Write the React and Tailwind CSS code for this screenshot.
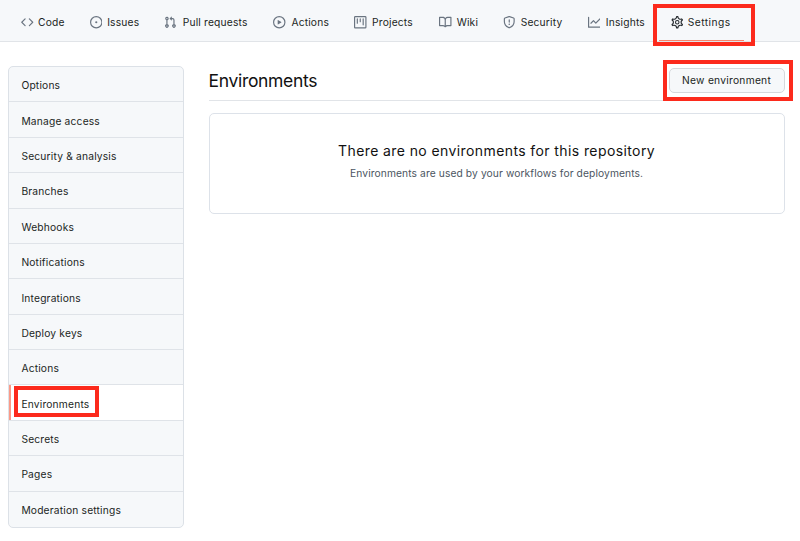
import React from "react";

const gearTeeth =
  "M7.429 1.525a6.593 6.593 0 011.142 0c.036.003.108.036.137.146l.289 1.105c.147.56.55.967.997 1.189.174.086.341.183.501.29.417.278.97.423 1.53.27l1.102-.303c.11-.03.175.016.195.046.219.31.41.641.573.989.014.031.022.11-.059.19l-.815.806c-.411.406-.562.957-.53 1.456a4.588 4.588 0 010 .582c-.032.499.119 1.05.53 1.456l.815.806c.08.08.073.159.059.19a6.494 6.494 0 01-.573.99c-.02.029-.086.074-.195.045l-1.103-.303c-.559-.153-1.112-.008-1.529.27-.16.107-.327.204-.5.29-.449.222-.851.628-.998 1.189l-.289 1.105c-.029.11-.101.143-.137.146a6.613 6.613 0 01-1.142 0c-.036-.003-.108-.037-.137-.146l-.289-1.105c-.147-.56-.55-.967-.997-1.189a4.502 4.502 0 01-.501-.29c-.417-.278-.97-.423-1.53-.27l-1.102.303c-.11.03-.175-.016-.195-.046a6.492 6.492 0 01-.573-.989c-.014-.031-.022-.11.059-.19l.815-.806c.411-.406.562-.957.53-1.456a4.587 4.587 0 010-.582c.032-.499-.119-1.05-.53-1.456l-.815-.806c-.08-.08-.073-.159-.059-.19a6.44 6.44 0 01.573-.99c.02-.029.086-.075.195-.045l1.103.303c.559.153 1.112.008 1.529-.27.16-.107.327-.204.5-.29.449-.222.851-.628.998-1.189l.289-1.105c.029-.11.101-.143.137-.146z";

const icons = {
  code: <path d="M4.72 3.22a.75.75 0 011.06 1.06L2.06 8l3.72 3.72a.75.75 0 11-1.06 1.06L.47 8.53a.75.75 0 010-1.06l4.25-4.25zm6.56 0a.75.75 0 10-1.06 1.06L13.94 8l-3.72 3.72a.75.75 0 101.06 1.06l4.25-4.25a.75.75 0 000-1.06l-4.25-4.25z" />,
  issue: (
    <>
      <circle cx="8" cy="8" r="7.25" fill="none" stroke="currentColor" strokeWidth="1.5" />
      <circle cx="8" cy="8" r="1.4" />
    </>
  ),
  pull: <path d="M7.177 3.073L9.573.677A.25.25 0 0110 .854v4.792a.25.25 0 01-.427.177L7.177 3.427a.25.25 0 010-.354zM3.75 2.5a.75.75 0 100 1.5.75.75 0 000-1.5zm-2.25.75a2.25 2.25 0 113 2.122v5.256a2.251 2.251 0 11-1.5 0V5.372A2.25 2.25 0 011.5 3.25zM11 2.5h-1V4h1a1 1 0 011 1v5.628a2.251 2.251 0 101.5 0V5A2.5 2.5 0 0011 2.5zm1 10.25a.75.75 0 111.5 0 .75.75 0 01-1.5 0zM3.75 12a.75.75 0 100 1.5.75.75 0 000-1.5z" fillRule="evenodd" />,
  play: <path d="M1.5 8a6.5 6.5 0 1113 0 6.5 6.5 0 01-13 0zM8 0a8 8 0 100 16A8 8 0 008 0zM6.379 5.227A.25.25 0 006 5.442v5.117a.25.25 0 00.379.214l4.264-2.559a.25.25 0 000-.428L6.379 5.227z" fillRule="evenodd" />,
  project: <path d="M1.75 0A1.75 1.75 0 000 1.75v12.5C0 15.216.784 16 1.75 16h12.5A1.75 1.75 0 0016 14.25V1.75A1.75 1.75 0 0014.25 0H1.75zM1.5 1.75a.25.25 0 01.25-.25h12.5a.25.25 0 01.25.25v12.5a.25.25 0 01-.25.25H1.75a.25.25 0 01-.25-.25V1.75zM11.75 3a.75.75 0 00-.75.75v7.5a.75.75 0 001.5 0v-7.5a.75.75 0 00-.75-.75zm-8.25.75a.75.75 0 011.5 0v5.5a.75.75 0 01-1.5 0v-5.5zM8 3a.75.75 0 00-.75.75v3.5a.75.75 0 001.5 0v-3.5A.75.75 0 008 3z" fillRule="evenodd" />,
  book: <path d="M0 1.75A.75.75 0 01.75 1h4.253c1.227 0 2.317.59 3 1.501A3.744 3.744 0 0111.006 1h4.245a.75.75 0 01.75.75v10.5a.75.75 0 01-.75.75h-4.507a2.25 2.25 0 00-1.591.659l-.622.621a.75.75 0 01-1.06 0l-.622-.621A2.25 2.25 0 005.258 13H.75a.75.75 0 01-.75-.75V1.75zm8.755 3a2.25 2.25 0 012.25-2.25H14.5v9h-3.757c-.71 0-1.4.201-1.992.572l.004-7.322zm-1.504 7.324l.004-5.073-.002-2.253A2.25 2.25 0 005.003 2.5H1.5v9h3.757a3.75 3.75 0 011.994.574z" fillRule="evenodd" />,
  shield: <path d="M7.467.133a1.75 1.75 0 011.066 0l5.25 1.68A1.75 1.75 0 0115 3.48V7c0 1.566-.32 3.182-1.303 4.682-.983 1.498-2.585 2.813-5.032 3.855a1.7 1.7 0 01-1.33 0c-2.447-1.042-4.049-2.357-5.032-3.855C1.32 10.182 1 8.566 1 7V3.48a1.75 1.75 0 011.217-1.667l5.25-1.68zm.61 1.429a.25.25 0 00-.153 0l-5.25 1.68a.25.25 0 00-.174.238V7c0 1.358.275 2.666 1.057 3.86.784 1.194 2.121 2.34 4.366 3.297a.2.2 0 00.154 0c2.245-.956 3.582-2.104 4.366-3.298C13.225 9.666 13.5 8.36 13.5 7V3.48a.25.25 0 00-.174-.237l-5.25-1.68zM9 10.5a1 1 0 11-2 0 1 1 0 012 0zm-.25-5.75a.75.75 0 10-1.5 0v3a.75.75 0 001.5 0v-3z" fillRule="evenodd" />,
  graph: <path d="M1.5 1.75a.75.75 0 00-1.5 0v12.5c0 .414.336.75.75.75h14.5a.75.75 0 000-1.5H1.5V1.75zm14.28 2.53a.75.75 0 00-1.06-1.06L10 7.94 7.53 5.47a.75.75 0 00-1.06 0L3.22 8.72a.75.75 0 001.06 1.06L7 7.06l2.47 2.47a.75.75 0 001.06 0l5.25-5.25z" fillRule="evenodd" />,
  gear: (
    <g fill="none" stroke="currentColor" strokeWidth="1.35">
      <path d={gearTeeth} transform="translate(8 8) scale(1.115) translate(-8 -8)" />
      <circle cx="8" cy="8" r="2.25" />
    </g>
  ),
};

const tabs = [
  { icon: "code", label: "Code", width: "w-[68.5px]", gap: "gap-[4.6px]" },
  { icon: "issue", label: "Issues", width: "w-[74.2px]", gap: "gap-[5.2px]" },
  { icon: "pull", label: "Pull requests", width: "w-[109.8px]", gap: "gap-[6.5px]" },
  { icon: "play", label: "Actions", width: "w-[80.7px]", gap: "gap-[5.4px]" },
  { icon: "project", label: "Projects", width: "w-[85px]", gap: "gap-[5.4px]" },
  { icon: "book", label: "Wiki", width: "w-[64px]", gap: "gap-[5px]" },
  { icon: "shield", label: "Security", width: "w-[84.7px]", gap: "gap-[5px]" },
  { icon: "graph", label: "Insights", width: "w-[83.2px]", gap: "gap-[5.4px]" },
  { icon: "gear", label: "Settings", width: "w-[60px]", gap: "gap-[4.2px]", active: true },
];

const menu = [
  "Options", "Manage access", "Security & analysis", "Branches", "Webhooks", "Notifications",
  "Integrations", "Deploy keys", "Actions", "Environments", "Secrets", "Pages", "Moderation settings",
];

function Tab({ icon, label, width, gap, active }) {
  return (
    <a className={`relative flex h-full shrink-0 items-center whitespace-nowrap pt-[4px] ${width} ${gap}`}>
      <svg viewBox="0 0 16 16" fill="currentColor" className={`size-[12.5px] shrink-0 ${active ? "text-[#24292e]" : "text-[#6a7480]"}`}>
        {icons[icon]}
      </svg>
      <span className={active ? "tracking-[0.44px]" : "tracking-[0.18px]"}>{label}</span>
      {active && (
        <>
          <span className="absolute -left-[18px] top-1 h-[42px] w-[102px] border-4 border-[#fc2a1c]" />
          <span className="absolute bottom-0 -left-3 h-px w-[85px] bg-[#f9826c]" />
        </>
      )}
    </a>
  );
}

export default function App() {
  return (
    <div className="h-[541px] w-[800px] overflow-hidden bg-white font-['Inter',sans-serif] text-[10.25px] tracking-[0.13px] text-[#1b1f23]">
      <nav className="flex h-[42px] border-b border-[#e1e4e8] bg-[#f6f8fa] pl-[21px]">
        {tabs.map((t) => <Tab key={t.label} {...t} />)}
      </nav>
      <div className="flex items-start gap-[24.6px] pl-[8.4px] pt-6">
        <aside className="grid h-[462px] w-[175.6px] shrink-0 auto-rows-fr divide-y divide-[#dfe3e8] rounded-[5px] border border-[#dce1e7] bg-[#f6f8fa]">
          {menu.map((m) => (
            <a key={m} className={`relative flex items-center pl-[12px] pt-[3.4px] tracking-[0.18px] ${m === "Environments" ? "bg-white" : ""}`}>
              {m}
              {m === "Environments" && (
                <>
                  <span className="absolute inset-y-0 left-0 w-[1.5px] bg-[#fb9a88]" />
                  <span className="absolute left-[4.6px] top-[1px] h-[31px] w-[85px] border-4 border-[#fc2a1c]" />
                </>
              )}
            </a>
          ))}
        </aside>
        <main className="w-[576px]">
          <header className="flex h-[35px] items-start justify-between border-b border-[#e1e4e8]">
            <h1 className="pt-[1.5px] text-[17.5px] leading-[26px] tracking-[-0.33px] text-[#111]">Environments</h1>
            <div className="relative pt-[2px]">
              <button className="h-[25px] w-[116px] rounded-[5px] border border-[#d5d8dc] bg-[#f6f8fa] tracking-[0.25px]">New environment</button>
              <span className="absolute -left-[6px] -top-[6px] h-[41px] w-[130px] border-4 border-[#fc2a1c]" />
            </div>
          </header>
          <section className="mt-3 h-[101px] rounded-[5px] border border-[#dde2e9] pt-[26px] text-center">
            <h2 className="text-[14px] leading-[21px] tracking-[0.4px] text-[#111]">There are no environments for this repository</h2>
            <p className="mt-[4px] leading-4 tracking-[0.1px] text-[#4b5561]">Environments are used by your workflows for deployments.</p>
          </section>
        </main>
      </div>
    </div>
  );
}
